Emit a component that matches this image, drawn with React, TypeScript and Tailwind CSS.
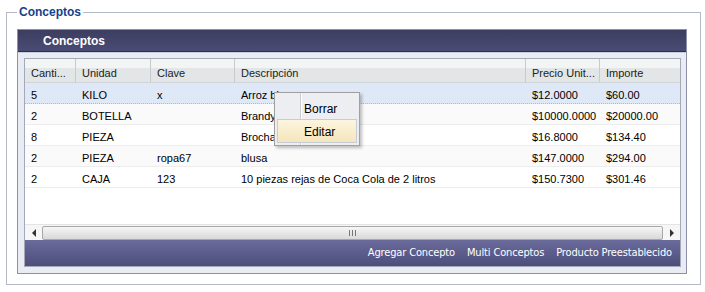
import React from "react";

const rows = [
  ["5", "KILO", "x", "Arroz blanco", "$12.0000", "$60.00"],
  ["2", "BOTELLA", "", "Brandy", "$10000.0000", "$20000.00"],
  ["8", "PIEZA", "", "Brocha", "$16.8000", "$134.40"],
  ["2", "PIEZA", "ropa67", "blusa", "$147.0000", "$294.00"],
  ["2", "CAJA", "123", "10 piezas rejas de Coca Cola de 2 litros", "$150.7300", "$301.46"],
];

const cols = ["w-[51px]", "w-[75px]", "w-[84px]", "w-[291px]", "w-[74px]", "w-[80px]"];
const heads = ["Canti...", "Unidad", "Clave", "Descripción", "Precio Unit...", "Importe"];

export default function App() {
  return (
    <div
      className="w-[705px] h-[292px] bg-white pt-[12px] pl-[6px] text-[11px] text-black"
      style={{ fontFamily: '"Liberation Sans", Arial, sans-serif' }}
    >
      <div className="relative w-[695px] h-[273px] border border-[#b5b8c8] pl-[10px] pt-[16px]">
        <span className="absolute left-[10px] top-[-9px] bg-white px-[2px] text-[12px] font-bold text-[#15428b] leading-[16px]">
          Conceptos
        </span>
        <div className="w-[670px] h-[245px] border border-[#8d8fa8] bg-[#e9ecf3] flex flex-col">
          <div className="h-[22px] bg-gradient-to-b from-[#3c3d60] to-[#4b4c74] pl-[25px] flex items-center text-white font-bold text-[12px] border-b border-[#2d2e4a]">
            Conceptos
          </div>
          <div className="h-[1px] bg-[#c8cfe0]" />
          <div className="ml-[6px] mt-[5px] w-[657px] border border-[#a3a9b8] bg-white flex flex-col">
            <div className="flex h-[24px] bg-gradient-to-b from-[#f3f5f5] from-40% to-[#e2e6e6] to-40% border-b border-[#d0d4d8]">
              {heads.map((h, i) => (
                <div
                  key={i}
                  className={`${cols[i]} ${i < 5 ? "border-r border-[#c7cbcf]" : "flex-1"} shrink-0 pl-[6px] pt-[6px] text-[#222]`}
                >
                  {h}
                </div>
              ))}
            </div>
            <div className="h-[141px]">
              {rows.map((r, ri) => (
                <div
                  key={ri}
                  className={`flex h-[21px] border-b ${
                    ri === 0
                      ? "bg-[#dfe8f6] border-dotted border-[#a3bae9]"
                      : ri % 2 === 1
                      ? "bg-[#fafafa] border-[#ededed]"
                      : "bg-white border-[#ededed]"
                  }`}
                >
                  {r.map((c, ci) => (
                    <div key={ci} className={`${cols[ci]} shrink-0 pl-[6px] pt-[4px] ${ci === 5 ? "flex-1" : ""}`}>
                      {c}
                    </div>
                  ))}
                </div>
              ))}
            </div>
            <div className="h-[16px] flex items-center bg-[#f6f6f6] border-t border-[#e4e4e4]">
              <div className="w-[17px] h-full flex items-center justify-center">
                <div className="w-0 h-0 border-y-[4px] border-y-transparent border-r-[4px] border-r-[#333]" />
              </div>
              <div className="flex-1 h-[14px] rounded-[2px] border border-[#a8a8a8] bg-gradient-to-b from-[#f6f6f6] to-[#d9d9d9] flex items-center justify-center">
                <div className="flex gap-[2px]">
                  <div className="w-[1px] h-[6px] bg-[#777]" />
                  <div className="w-[1px] h-[6px] bg-[#777]" />
                  <div className="w-[1px] h-[6px] bg-[#777]" />
                </div>
              </div>
              <div className="w-[17px] h-full flex items-center justify-center">
                <div className="w-0 h-0 border-y-[4px] border-y-transparent border-l-[4px] border-l-[#333]" />
              </div>
            </div>
            <div
              className="h-[26px] bg-gradient-to-b from-[#6a6b9b] to-[#4d4e7c] flex items-center justify-end pr-[8px] gap-[12px] text-white text-[11px] tracking-[-0.15px]"
              style={{ fontFamily: '"DejaVu Sans Condensed", "Liberation Sans", sans-serif' }}
            >
              <span>Agregar Concepto</span>
              <span>Multi Conceptos</span>
              <span>Producto Preestablecido</span>
            </div>
          </div>
        </div>
        <div className="absolute left-[267px] top-[79px] w-[86px] h-[54px] border border-[#a0a0a0] bg-[#eceef2] shadow-[2px_2px_3px_rgba(0,0,0,0.25)]">
          <div className="absolute left-[25px] top-0 bottom-0 w-[1px] bg-[#c9ccd3]" />
          <div className="absolute left-[26px] top-0 bottom-0 w-[1px] bg-white" />
          <div className="absolute left-[29px] top-[8px] text-[12px] leading-[16px]">Borrar</div>
          <div className="absolute left-[2px] top-[26px] w-[80px] h-[24px] border border-[#c6cdd6] bg-gradient-to-b from-[#fcf5de] to-[#f5e5bc]" />
          <div className="absolute left-[29px] top-[31px] text-[12px] leading-[16px]">Editar</div>
        </div>
      </div>
    </div>
  );
}
